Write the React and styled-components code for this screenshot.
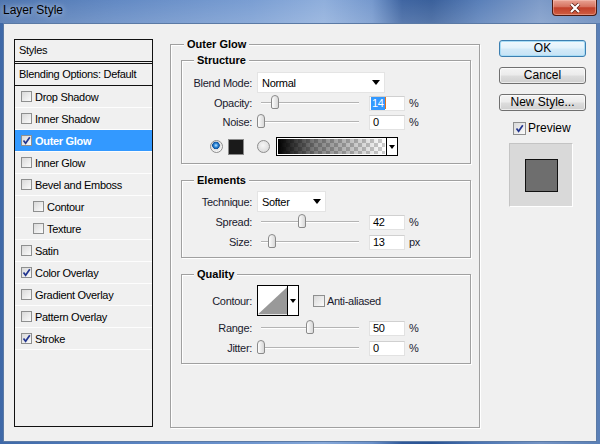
import styled, { createGlobalStyle } from "styled-components";

const GlobalStyle = createGlobalStyle`
  body {
    margin: 0;
    font-family: "Liberation Sans", Arial, sans-serif;
  }
`;

const styleItems = [
  { label: "Drop Shadow" },
  { label: "Inner Shadow" },
  { label: "Outer Glow", checked: true, active: true },
  { label: "Inner Glow" },
  { label: "Bevel and Emboss" },
  { label: "Contour", indent: true },
  { label: "Texture", indent: true },
  { label: "Satin" },
  { label: "Color Overlay", checked: true },
  { label: "Gradient Overlay" },
  { label: "Pattern Overlay" },
  { label: "Stroke", checked: true },
];

const CheckMark = () => (
  <svg width="9" height="9" viewBox="0 0 9 9">
    <path d="M1.5 4.5 L3.6 7.2 L7.8 1.2" fill="none" stroke="#22358f" strokeWidth="1.7" />
  </svg>
);

const Slider = ({ pos }) => (
  <SliderWrap>
    <Track>
      <Thumb style={{ left: `${pos}%` }} />
    </Track>
  </SliderWrap>
);

const Arrow = () => <ArrowDown />;

const App = () => {
  return (
    <>
      <GlobalStyle />
      <Frame>
        <TitleBar>
          <Title>Layer Style</Title>
          <CloseButton>
            <svg width="14" height="10" viewBox="0 0 14 10">
              <path d="M3 1 L11 9 M11 1 L3 9" stroke="#5a1c12" strokeWidth="3.6" />
              <path d="M3 1 L11 9 M11 1 L3 9" stroke="#ffffff" strokeWidth="2.2" />
            </svg>
          </CloseButton>
        </TitleBar>
        <Client>
          <StylesPanel>
            <PanelHeader>Styles</PanelHeader>
            <BlendingRow>Blending Options: Default</BlendingRow>
            {styleItems.map((item) => (
              <StyleItem key={item.label} $active={item.active} $indent={item.indent}>
                <Check>{item.checked && <CheckMark />}</Check>
                {item.label}
              </StyleItem>
            ))}
          </StylesPanel>

          <OuterGroup>
            <Legend $offset={3}>Outer Glow</Legend>

            <InnerGroup $mt={9}>
              <Legend $offset={12}>Structure</Legend>
              <Row $h={21} $mt={5}>
                <Label>Blend Mode:</Label>
                <Select $w={128}>
                  Normal
                  <Arrow />
                </Select>
              </Row>
              <Row $h={16} $mt={2}>
                <Label>Opacity:</Label>
                <Slider pos={14.3} />
                <Field>
                  <Selected>14</Selected>
                  <Caret />
                </Field>
                <Unit>%</Unit>
              </Row>
              <Row $h={16} $mt={3}>
                <Label>Noise:</Label>
                <Slider pos={0} />
                <Field>0</Field>
                <Unit>%</Unit>
              </Row>
              <ColorRow>
                <Radio $on />
                <Swatch />
                <Radio $ml={13} />
                <GradientBox>
                  <GradientFill />
                  <PickerArrow>
                    <Arrow />
                  </PickerArrow>
                </GradientBox>
              </ColorRow>
            </InnerGroup>

            <InnerGroup $mt={16}>
              <Legend $offset={12}>Elements</Legend>
              <Row $h={21} $mt={4}>
                <Label>Technique:</Label>
                <Select $w={69}>
                  Softer
                  <Arrow />
                </Select>
              </Row>
              <Row $h={16} $mt={2}>
                <Label>Spread:</Label>
                <Slider pos={42} />
                <Field>42</Field>
                <Unit>%</Unit>
              </Row>
              <Row $h={16} $mt={4}>
                <Label>Size:</Label>
                <Slider pos={11} />
                <Field>13</Field>
                <Unit>px</Unit>
              </Row>
            </InnerGroup>

            <InnerGroup $mt={16}>
              <Legend $offset={12}>Quality</Legend>
              <Row $h={31} $mt={4}>
                <Label>Contour:</Label>
                <ContourBox>
                  <svg width="31" height="29" viewBox="0 0 31 29">
                    <polygon points="0,29 31,0 31,29" fill="#999999" />
                  </svg>
                  <PickerArrow>
                    <Arrow />
                  </PickerArrow>
                </ContourBox>
                <CheckLabel $ml={14}>
                  <Check $size={12} />
                  Anti-aliased
                </CheckLabel>
              </Row>
              <Row $h={16} $mt={4}>
                <Label>Range:</Label>
                <Slider pos={50} />
                <Field>50</Field>
                <Unit>%</Unit>
              </Row>
              <Row $h={16} $mt={4}>
                <Label>Jitter:</Label>
                <Slider pos={0} />
                <Field>0</Field>
                <Unit>%</Unit>
              </Row>
            </InnerGroup>
          </OuterGroup>

          <ButtonColumn>
            <Button $primary>OK</Button>
            <Button>Cancel</Button>
            <Button>New Style...</Button>
            <PreviewToggle>
              <Check $size={13}>
                <CheckMark />
              </Check>
              Preview
            </PreviewToggle>
            <PreviewBox>
              <PreviewSquare />
            </PreviewBox>
          </ButtonColumn>
        </Client>
      </Frame>
    </>
  );
};

export default App;

const Frame = styled.div`
  width: 600px;
  height: 444px;
  display: flex;
  flex-direction: column;
  background: linear-gradient(
    90deg,
    #3f69a8 0%,
    #5680bf 20%,
    #6f96cf 42%,
    #86a8d9 54%,
    #6a90c9 62%,
    #30599a 67%,
    #2a5393 72%,
    #4c75b3 80%,
    #7393c4 90%,
    #5a7fb6 100%
  );
`;

const TitleBar = styled.div`
  height: 23px;
  display: flex;
  justify-content: space-between;
  align-items: flex-start;
  padding-left: 3px;
  background: linear-gradient(rgba(255, 255, 255, 0.08), rgba(255, 255, 255, 0.2));
`;

const Title = styled.div`
  font-size: 12px;
  line-height: 20px;
  color: #000;
  text-shadow: 0 0 6px rgba(255, 255, 255, 0.8);
`;

const CloseButton = styled.div`
  width: 45px;
  height: 16px;
  margin-right: 3px;
  box-sizing: border-box;
  border: 1px solid #4a1a12;
  border-top: none;
  border-radius: 0 0 4px 4px;
  background: linear-gradient(#e9a394 0%, #d6725f 45%, #c2402a 52%, #cf5e42 100%);
  box-shadow: inset 0 0 0 1px rgba(255, 210, 200, 0.4);
  display: flex;
  align-items: center;
  justify-content: center;
`;

const Client = styled.div`
  flex: 1;
  margin: 0 3px 2px;
  background: #f0f0f0;
  border: 1px solid #5b7aa5;
  display: flex;
  align-items: flex-start;
  padding: 15px 0 0 10px;
  font-size: 11px;
  letter-spacing: -0.3px;
  color: #000;
`;

const StylesPanel = styled.div`
  width: 139px;
  height: 388px;
  box-sizing: border-box;
  border: 1px solid #111;
  flex-shrink: 0;
`;

const PanelHeader = styled.div`
  height: 21px;
  line-height: 21px;
  padding-left: 4px;
  border-bottom: 1px solid #111;
  margin-bottom: 1px;
`;

const BlendingRow = styled.div`
  height: 21px;
  line-height: 21px;
  padding-left: 4px;
  border-top: 1px solid #111;
  border-bottom: 1px solid #111;
`;

const StyleItem = styled.div`
  height: 21px;
  display: flex;
  align-items: center;
  padding-left: ${(p) => (p.$indent ? "18px" : "6px")};
  border-bottom: 1px solid #fdfdfd;
  background: ${(p) => (p.$active ? "#3399ff" : "transparent")};
  color: ${(p) => (p.$active ? "#fff" : "#000")};
  font-weight: ${(p) => (p.$active ? "bold" : "normal")};
`;

const Check = styled.span`
  width: ${(p) => p.$size || 11}px;
  height: ${(p) => p.$size || 11}px;
  box-sizing: border-box;
  border: 1px solid #8e8f8f;
  background: linear-gradient(135deg, #d9d9d9, #fbfbfb);
  margin-right: 3px;
  display: inline-flex;
  align-items: center;
  justify-content: center;
  flex-shrink: 0;
`;

const OuterGroup = styled.div`
  width: 310px;
  height: 384px;
  box-sizing: border-box;
  margin: 5px 0 0 17px;
  padding: 0 8px 0 10px;
  border: 1px solid #a0a0a0;
  box-shadow: inset 1px 1px 0 #fff, 1px 1px 0 #fff;
  flex-shrink: 0;
`;

const InnerGroup = styled.div`
  margin-top: ${(p) => p.$mt}px;
  padding-bottom: 7px;
  border: 1px solid #a0a0a0;
  box-shadow: inset 1px 1px 0 #fff, 1px 1px 0 #fff;
`;

const Legend = styled.div`
  width: fit-content;
  margin: -7px 0 0 ${(p) => p.$offset}px;
  padding: 0 3px;
  background: #f0f0f0;
  font-weight: bold;
  line-height: 13px;
  letter-spacing: 0;
`;

const Row = styled.div`
  height: ${(p) => p.$h}px;
  margin-top: ${(p) => p.$mt}px;
  display: flex;
  align-items: center;
`;

const Label = styled.div`
  width: 70px;
  margin-right: 5px;
  text-align: right;
  flex-shrink: 0;
  color: #1a1a2e;
`;

const Select = styled.div`
  width: ${(p) => p.$w}px;
  height: 21px;
  box-sizing: border-box;
  background: #fff;
  border: 1px solid #e4e4e4;
  display: flex;
  align-items: center;
  justify-content: space-between;
  padding: 0 4px 0 4px;
  font-size: 11px;
`;

const ArrowDown = styled.span`
  width: 0;
  height: 0;
  border-left: 4px solid transparent;
  border-right: 4px solid transparent;
  border-top: 5px solid #000;
`;

const SliderWrap = styled.div`
  width: 106px;
  height: 16px;
  box-sizing: border-box;
  padding: 0 4px;
  display: flex;
  align-items: center;
  flex-shrink: 0;
`;

const Track = styled.div`
  flex: 1;
  height: 1px;
  background: #b4b4b4;
  border-bottom: 1px solid #fff;
  position: relative;
`;

const Thumb = styled.span`
  position: absolute;
  top: -7px;
  width: 8px;
  height: 14px;
  box-sizing: border-box;
  transform: translateX(-50%);
  border: 1px solid #8a8a8a;
  border-radius: 4px 4px 2px 2px;
  background: linear-gradient(90deg, #fdfdfd, #d8d8d8);
`;

const Field = styled.div`
  width: 36px;
  height: 15px;
  box-sizing: border-box;
  margin-left: 6px;
  background: #fff;
  border: 1px solid #e2e2e2;
  border-top-color: #d0d0d0;
  display: flex;
  align-items: center;
  padding-left: 3px;
  font-size: 11px;
`;

const Selected = styled.span`
  background: #3399ff;
  color: #fff;
  line-height: 13px;
  padding: 0 1px;
  margin-left: -2px;
`;

const Caret = styled.span`
  width: 1px;
  height: 12px;
  background: #e0701c;
`;

const Unit = styled.span`
  margin-left: 4px;
  color: #1a1a2e;
`;

const ColorRow = styled.div`
  height: 19px;
  margin-top: 7px;
  padding-left: 28px;
  display: flex;
  align-items: center;
`;

const Radio = styled.span`
  width: 13px;
  height: 13px;
  box-sizing: border-box;
  margin-left: ${(p) => p.$ml || 0}px;
  border-radius: 50%;
  border: 1px solid #8d8d8d;
  background: ${(p) =>
    p.$on
      ? "radial-gradient(circle at 45% 40%, #bfe4ff 0, #2c86d6 2px, #0d4f9a 3.5px, #dcdcdc 4px, #f6f6f6 6px)"
      : "radial-gradient(circle at 45% 40%, #f6f6f6, #d2d2d2)"};
  flex-shrink: 0;
`;

const Swatch = styled.span`
  width: 16px;
  height: 16px;
  box-sizing: border-box;
  margin-left: 5px;
  background: #1a1a1a;
  border: 1px solid #8a8a8a;
`;

const GradientBox = styled.div`
  width: 122px;
  height: 19px;
  box-sizing: border-box;
  margin-left: 6px;
  border: 1px solid #000;
  display: flex;
`;

const GradientFill = styled.div`
  flex: 1;
  border: 1px solid #fff;
  background: linear-gradient(90deg, #000, rgba(0, 0, 0, 0.5) 35%, rgba(0, 0, 0, 0)),
    repeating-conic-gradient(#cdcdcd 0 25%, #ffffff 0 50%) 0 0 / 8px 8px;
`;

const PickerArrow = styled.div`
  width: 10px;
  border-left: 1px solid #000;
  background: #fff;
  display: flex;
  align-items: center;
  justify-content: center;

  span {
    border-left-width: 3px;
    border-right-width: 3px;
    border-top-width: 4px;
  }
`;

const ContourBox = styled.div`
  width: 42px;
  height: 31px;
  box-sizing: border-box;
  border: 1px solid #000;
  display: flex;
  background: #fff;
  flex-shrink: 0;

  svg {
    display: block;
  }
`;

const CheckLabel = styled.label`
  margin-left: ${(p) => p.$ml}px;
  display: flex;
  align-items: center;
  color: #1a1a2e;

  span {
    margin-right: 2px;
  }
`;

const ButtonColumn = styled.div`
  width: 87px;
  margin: 1px 0 0 19px;
  display: flex;
  flex-direction: column;
  gap: 10px;
  flex-shrink: 0;
  letter-spacing: 0;
`;

const Button = styled.button`
  width: 87px;
  height: 17px;
  padding: 0;
  font-family: "Liberation Sans", Arial, sans-serif;
  font-size: 12px;
  line-height: 15px;
  color: #000;
  border: 1px solid ${(p) => (p.$primary ? "#3c7fb1" : "#707070")};
  border-radius: 3px;
  background: ${(p) =>
    p.$primary
      ? "linear-gradient(#f0f8fd 0%, #e3f2fb 48%, #d3eaf8 52%, #c6e3f6 100%)"
      : "linear-gradient(#f4f4f4 0%, #ebebeb 48%, #dddddd 52%, #cfcfcf 100%)"};
  box-shadow: inset 0 0 0 1px ${(p) => (p.$primary ? "#a8dcf5" : "rgba(255,255,255,0.6)")};
`;

const PreviewToggle = styled.label`
  height: 14px;
  margin: 0 0 0 14px;
  display: flex;
  align-items: center;
  font-size: 12px;
  color: #000;

  span {
    margin-right: 2px;
  }
`;

const PreviewBox = styled.div`
  width: 64px;
  height: 64px;
  box-sizing: border-box;
  margin: -2px 0 0 10px;
  background: #d9d9d9;
  border: 1px solid #c4c4c4;
  border-right-color: #fff;
  border-bottom-color: #fff;
  display: flex;
  align-items: center;
  justify-content: center;
`;

const PreviewSquare = styled.div`
  width: 33px;
  height: 33px;
  box-sizing: border-box;
  background: #6e6e6e;
  border: 1px solid #111;
`;
